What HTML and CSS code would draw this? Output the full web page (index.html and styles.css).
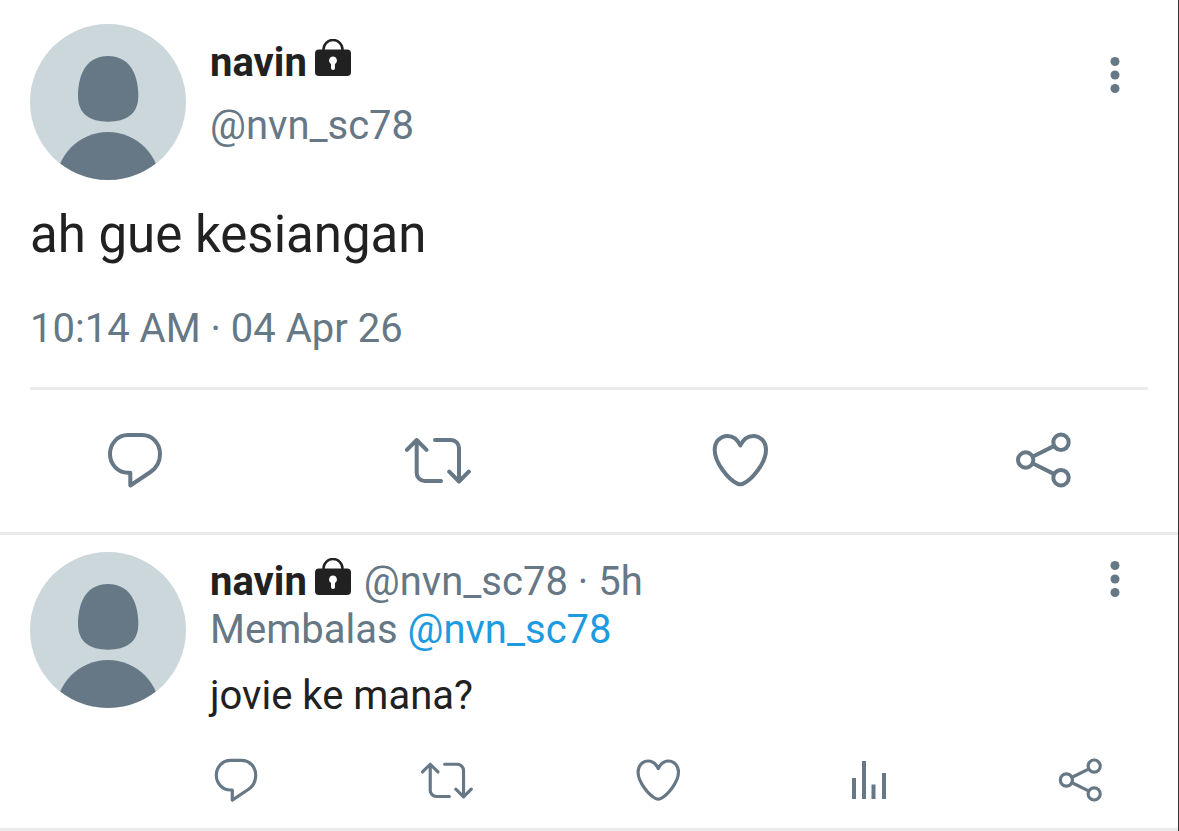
FILE: index.html
```html
<!DOCTYPE html>
<html lang="id">
<head>
<meta charset="utf-8">
<meta name="viewport" content="width=device-width, initial-scale=1">
<title>navin</title>
<link rel="stylesheet" href="styles.css">
</head>
<body>
<svg class="sprite" aria-hidden="true">
  <symbol id="avatar" viewBox="0 0 156 156">
    <clipPath id="round"><circle cx="78" cy="78" r="78"/></clipPath>
    <g clip-path="url(#round)">
      <path fill="#ccd7db" d="M0 0h156v156H0z"/>
      <path fill="#667785" d="M78 32c20 0 30.300 16 30.300 40 0 18-12 25.700-30.300 25.700S48 90 48 72c0-24 10-40 30-40z"/>
      <circle cx="78" cy="160" r="52" fill="#667785"/>
    </g>
  </symbol>
  <symbol id="lock" viewBox="0 0 36 38">
    <path fill="none" stroke="currentColor" stroke-width="2.500" d="M8.500 13v-2.500a9.500 9.500 0 0 1 19 0V13"/>
    <rect y="10.500" width="36" height="26.500" rx="4" fill="currentColor"/>
    <path fill="#fff" d="M18 17.500a4 4 0 0 1 2 7.400V29a2 2 0 0 1-4 0v-4.100a4 4 0 0 1 2-7.400z"/>
  </symbol>
  <symbol id="more" viewBox="0 0 10 38">
    <g fill="currentColor"><circle cx="5" cy="5.500" r="4.500"/><circle cx="5" cy="19" r="4.500"/><circle cx="5" cy="32.500" r="4.500"/></g>
  </symbol>
  <symbol id="reply" viewBox="0 0 66 66">
    <path class="line" d="M26 8h14c10.500 0 18 8.500 18 19 0 8-3.500 14-9.500 18L28.300 58.500V45.700H26C15.500 45.700 8 37 8 27S15.500 8 26 8z"/>
  </symbol>
  <symbol id="retweet" viewBox="0 0 66 66">
    <path class="line" d="M1.900 22.800l9.800-9.800 9.800 9.800M11.700 13v33a8 8 0 0 0 8 8H36M30 13h16a8 8 0 0 1 8 8v33.500M44.200 44.700l9.800 9.800 9.800-9.800"/>
  </symbol>
  <symbol id="like" viewBox="0 0 66 66">
    <path class="line" d="M33.300 18.500C30.500 12.500 26 8.900 20.500 8.900 13 8.900 7.700 15 7.700 23c0 13.500 14.600 30 22.600 33.600q3 1.400 6 0C44.300 53 59 36.500 59 23c0-8-5.300-14.100-12.800-14.100-5.500 0-10 3.600-12.900 9.600z"/>
  </symbol>
  <symbol id="stats" viewBox="0 0 52 52">
    <path fill="currentColor" d="M9 24h4v21H9zM19 7h4v38h-4zM28.500 30.500h4V45h-4zM39 19h4v26h-4z"/>
  </symbol>
  <symbol id="share" viewBox="0 0 66 66">
    <g class="line"><circle cx="15.700" cy="33" r="7.700"/><circle cx="51" cy="15.300" r="7.700"/><circle cx="51" cy="50.700" r="7.700"/><path d="M23 29.500l20.800-10.400M23 36.500l20.800 10.400"/></g>
  </symbol>
</svg>

<main class="thread">
  <article class="tweet">
    <header class="head">
      <svg class="avatar" role="img" aria-label="navin"><use href="#avatar"/></svg>
      <div class="who">
        <div class="byline"><strong class="name">navin</strong><svg class="lock" aria-hidden="true"><use href="#lock"/></svg></div>
        <span class="muted">@nvn_sc78</span>
      </div>
      <button class="more" aria-label="More"><svg><use href="#more"/></svg></button>
    </header>
    <p class="text">ah gue kesiangan</p>
    <time class="time muted">10:14 AM · 04 Apr 26</time>
    <div class="actions">
      <button class="action" aria-label="Reply"><svg><use href="#reply"/></svg></button>
      <button class="action" aria-label="Retweet"><svg><use href="#retweet"/></svg></button>
      <button class="action" aria-label="Like"><svg><use href="#like"/></svg></button>
      <button class="action" aria-label="Share"><svg><use href="#share"/></svg></button>
    </div>
  </article>

  <article class="tweet tweet-reply">
    <svg class="avatar" role="img" aria-label="navin"><use href="#avatar"/></svg>
    <div class="body">
      <div class="byline"><strong class="name">navin</strong><svg class="lock" aria-hidden="true"><use href="#lock"/></svg><span class="muted meta">@nvn_sc78 · 5h</span></div>
      <p class="muted">Membalas <a class="mention" href="#">@nvn_sc78</a></p>
      <p class="reply-text">jovie ke mana?</p>
      <div class="actions-small">
        <button class="action-small" aria-label="Reply"><svg><use href="#reply"/></svg></button>
        <button class="action-small" aria-label="Retweet"><svg><use href="#retweet"/></svg></button>
        <button class="action-small" aria-label="Like"><svg><use href="#like"/></svg></button>
        <button class="action-small" aria-label="Statistics"><svg><use href="#stats"/></svg></button>
        <button class="action-small" aria-label="Share"><svg><use href="#share"/></svg></button>
      </div>
    </div>
    <button class="more" aria-label="More"><svg><use href="#more"/></svg></button>
  </article>
</main>
</body>
</html>
```
FILE: styles.css
```css
* { box-sizing: border-box; }
body {
  margin: 0;
  background: #fff;
  color: #212121;
  font: 40px/48px Roboto, "Liberation Sans", sans-serif;
}
p { margin: 0; }
button {
  padding: 0;
  border: 0;
  background: none;
  color: #667785;
  cursor: pointer;
}
svg { display: block; }
.sprite { position: absolute; width: 0; height: 0; }
.line {
  fill: none;
  stroke: currentColor;
  stroke-width: 4;
  stroke-linecap: round;
  stroke-linejoin: round;
}
.thread { min-height: 100vh; border-right: 1px solid #333; }
.tweet { border-bottom: 3px solid #ebebeb; padding: 24px 30px 0; }
.head { display: flex; align-items: flex-start; gap: 24px; }
.avatar { flex: none; width: 156px; height: 156px; }
.who { flex: 1; padding-top: 15px; }
.who .byline { margin-bottom: 15px; }
.byline { display: flex; align-items: flex-start; gap: 8px; }
.name { font-weight: 700; }
.lock { flex: none; width: 36px; height: 38px; }
.muted { color: #667785; }
.meta { margin-left: 5px; }
.mention { color: #1d9be0; text-decoration: none; }
.more { flex: none; margin: 32px 28px 0 0; }
.more svg { width: 10px; height: 38px; }
.text { margin-top: 25px; font-size: 51px; line-height: 60px; }
.time { display: block; margin-top: 40px; padding-bottom: 34px; border-bottom: 3px solid #ebebeb; }
.actions { display: flex; justify-content: space-between; padding: 37px 72px 39px; }
.action svg { width: 66px; height: 66px; }
.tweet-reply { display: flex; align-items: flex-start; gap: 24px; padding-top: 17px; }
.tweet-reply .more { margin-top: 8px; }
.body { flex: 1; padding-top: 6px; }
.reply-text { margin-top: 18px; }
.actions-small { display: flex; justify-content: space-between; margin: 34px -20px 22px 0; }
.action-small svg { width: 52px; height: 52px; }
```
